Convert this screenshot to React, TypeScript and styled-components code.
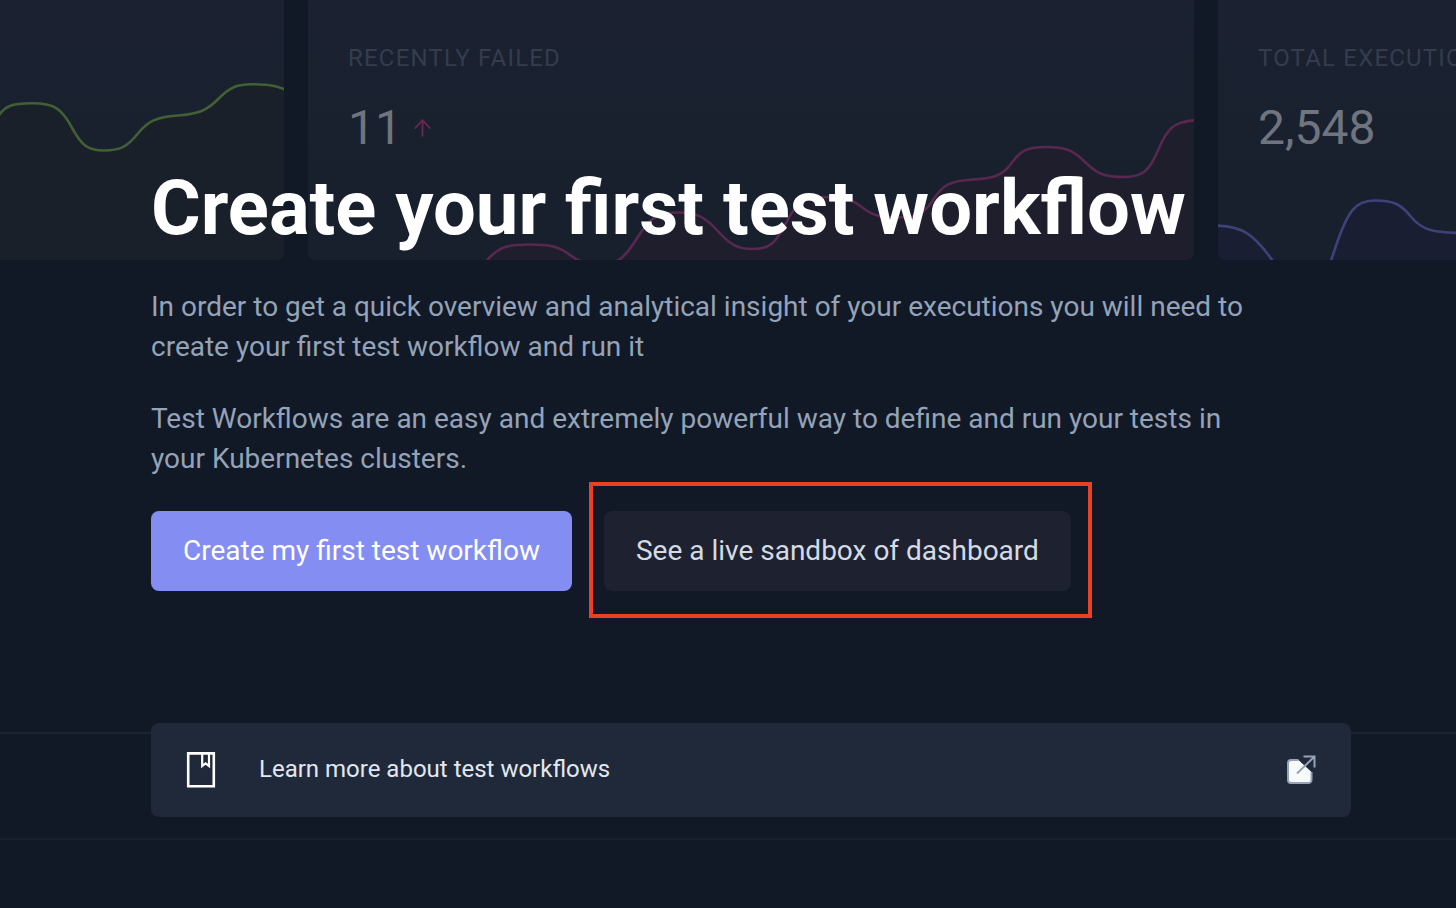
import React from "react";
import styled, { createGlobalStyle } from "styled-components";

const GlobalStyle = createGlobalStyle`
  *, *::before, *::after { box-sizing: border-box; }
  body {
    margin: 0;
    background: #111826;
    font-family: Roboto, "Liberation Sans", sans-serif;
    color: #94a3b8;
  }
  h1, p { margin: 0; }
`;

const Page = styled.div`
  display: grid;
  min-height: 100vh;
  overflow: hidden;
  background: #111826;
`;

const Backdrop = styled.div`
  grid-area: 1 / 1;
  min-width: 0;
`;

const Cards = styled.div`
  display: grid;
  grid-template-columns: 284fr 886fr 238fr;
  gap: 24px;
  height: 260px;
`;

const Card = styled.section<{ $edge?: "left" | "right" }>`
  display: grid;
  min-width: 0;
  overflow: hidden;
  background: linear-gradient(#1b2130, #18202e 70%, #181f2d);
  border-radius: ${({ $edge }) =>
    $edge === "left" ? "0 0 8px 0" : $edge === "right" ? "0 0 0 8px" : "0 0 8px 8px"};
`;

const Chart = styled.svg`
  grid-area: 1 / 1;
  display: block;
  width: 100%;
  height: 260px;
`;

const Stat = styled.div`
  grid-area: 1 / 1;
  min-width: 0;
  padding: 44px 0 0 40px;
  white-space: nowrap;
`;

const StatLabel = styled.div`
  font-size: 24px;
  line-height: 28px;
  letter-spacing: 0.05em;
  text-transform: uppercase;
  color: #343d4e;
`;

const StatValue = styled.div`
  display: flex;
  align-items: center;
  gap: 12px;
  margin-top: 28px;
  font-size: 48px;
  line-height: 56px;
  color: #6f747f;
`;

const Divider = styled.div<{ $space: number; $color: string }>`
  height: 2px;
  margin-top: ${({ $space }) => $space}px;
  background: ${({ $color }) => $color};
`;

const Content = styled.main`
  grid-area: 1 / 1;
  z-index: 1;
  min-width: 0;
  padding: 161px 105px 90px 151px;
`;

const Title = styled.h1`
  font-size: 76px;
  line-height: 94px;
  font-weight: 700;
  color: #ffffff;
`;

const Copy = styled.p`
  max-width: 1120px;
  margin-top: 32px;
  font-size: 28px;
  line-height: 40px;
`;

const Actions = styled.div`
  display: flex;
  gap: 32px;
  margin-top: 32px;
`;

const Button = styled.button<{ $primary?: boolean }>`
  height: 80px;
  padding: 0 32px;
  border: 0;
  border-radius: 8px;
  font: inherit;
  font-size: 28px;
  line-height: 40px;
  white-space: nowrap;
  cursor: pointer;
  color: ${({ $primary }) => ($primary ? "#ffffff" : "#d5dbe4")};
  background: ${({ $primary }) => ($primary ? "#848df2" : "#1e2230")};
`;

const Highlight = styled.div`
  position: relative;
  &::after {
    content: "";
    position: absolute;
    inset: -29px -21px -27px -15px;
    border: 4px solid #ea4025;
    pointer-events: none;
  }
`;

const LearnMore = styled.a`
  display: flex;
  align-items: flex-start;
  height: 94px;
  margin-top: 132px;
  padding: 29px 34px;
  border-radius: 8px;
  background: #202939;
  color: #e2e8f0;
  font-size: 24px;
  line-height: 34px;
  text-decoration: none;
`;

const LearnText = styled.span`
  flex: 1;
  margin-left: 42px;
`;

type Point = [number, number];

const TENSION = 0.8;

const mix = (a: Point, b: Point, t: number): Point => [a[0] + (b[0] - a[0]) * t, a[1] + (b[1] - a[1]) * t];

// Rounds every corner of a polyline between the midpoints of its edges.
function smooth(corners: Point[]): string {
  const fmt = (p: Point) => `${p[0].toFixed(2)} ${p[1].toFixed(2)}`;
  let from = mix(corners[0], corners[1], 0.5);
  let d = `M${fmt(from)}`;
  for (let i = 1; i < corners.length - 1; i++) {
    const corner = corners[i];
    const to = mix(corner, corners[i + 1], 0.5);
    d += ` C${fmt(mix(from, corner, TENSION))} ${fmt(mix(to, corner, TENSION))} ${fmt(to)}`;
    from = to;
  }
  return d;
}

const PASSED: Point[] = [
  [-10, 130], [6, 103.3], [59, 103.3], [84, 150.5], [124, 150.5], [151, 117.5], [204, 113.5],
  [233, 84], [274, 84.5], [302, 97],
];

const FAILED: Point[] = [
  [165, 276], [193, 244.5], [248, 244.5], [274, 264], [313, 264], [345, 212.5], [393, 212.5],
  [426, 249], [465, 249], [491, 197], [541, 197], [567, 217.5], [614, 217.5], [637, 181],
  [693, 178], [715, 147], [762, 147], [792, 177], [839, 177], [862, 121.5], [915, 119],
];

const TOTAL: Point[] = [
  [-40, 225.5], [30, 225.5], [80, 297], [101, 297], [133, 200.5], [180, 200.5], [206, 233], [290, 233],
];

function Trend({ corners, width, stroke, fill }: { corners: Point[]; width: number; stroke: string; fill: string }) {
  const line = smooth(corners);
  return (
    <Chart viewBox={`0 0 ${width} 260`} preserveAspectRatio="none" aria-hidden="true">
      <path d={`${line} V300 H${corners[0][0]} Z`} fill={fill} />
      <path d={line} fill="none" stroke={stroke} strokeWidth="2.6" />
    </Chart>
  );
}

export default function App() {
  return (
    <>
      <GlobalStyle />
      <Page>
        <Backdrop>
          <Cards>
            <Card $edge="left">
              <Trend corners={PASSED} width={284} stroke="#436035" fill="#1a202a" />
            </Card>
            <Card>
              <Trend corners={FAILED} width={886} stroke="#592850" fill="#1e1e2d" />
              <Stat>
                <StatLabel>Recently failed</StatLabel>
                <StatValue>
                  11
                  <svg width="18" height="18" viewBox="0 0 18 18" fill="none" stroke="#6c264f" strokeWidth="1.8" aria-hidden="true">
                    <path d="M8.500 17.500V1M0.800 9.500L8.500 1.200l7.700 8.300" />
                  </svg>
                </StatValue>
              </Stat>
            </Card>
            <Card $edge="right">
              <Trend corners={TOTAL} width={238} stroke="#3e4278" fill="#1a1e32" />
              <Stat>
                <StatLabel>Total executions</StatLabel>
                <StatValue>2,548</StatValue>
              </Stat>
            </Card>
          </Cards>
          <Divider $space={472} $color="#1c2331" />
          <Divider $space={104} $color="#181f2c" />
        </Backdrop>
        <Content>
          <Title>Create your first test workflow</Title>
          <Copy>
            In order to get a quick overview and analytical insight of your executions you will need to
            create your first test workflow and run it
          </Copy>
          <Copy>
            Test Workflows are an easy and extremely powerful way to define and run your tests in your
            Kubernetes clusters.
          </Copy>
          <Actions>
            <Button type="button" $primary>Create my first test workflow</Button>
            <Highlight>
              <Button type="button">See a live sandbox of dashboard</Button>
            </Highlight>
          </Actions>
          <LearnMore href="#learn">
            <svg width="32" height="36" viewBox="0 0 32 36" fill="none" stroke="#ffffff" aria-hidden="true">
              <path d="M3.2 1.4h25.6v32.800H3.2z" strokeWidth="2.6" />
              <path d="M17.200 2v12l3.400-2.600 3.400 2.600V2" strokeWidth="2.2" />
            </svg>
            <LearnText>Learn more about test workflows</LearnText>
            <svg width="32" height="36" viewBox="0 -2 32 36" fill="none" stroke="#94a3b8" aria-hidden="true">
              <path
                d="M13.500 6H6a3 3 0 0 0-3 3V26a3 3 0 0 0 3 3h17.500a3 3 0 0 0 3-3v-8z"
                fill="#f8fafc"
                stroke="none"
              />
              <path d="M13.500 6H6a3 3 0 0 0-3 3V26a3 3 0 0 0 3 3h17.500a3 3 0 0 0 3-3v-8" strokeWidth="2" />
              <path d="M12 19.500L29.500 2.500M18.500 2.500H29.500v11" strokeWidth="2" />
            </svg>
          </LearnMore>
        </Content>
      </Page>
    </>
  );
}
